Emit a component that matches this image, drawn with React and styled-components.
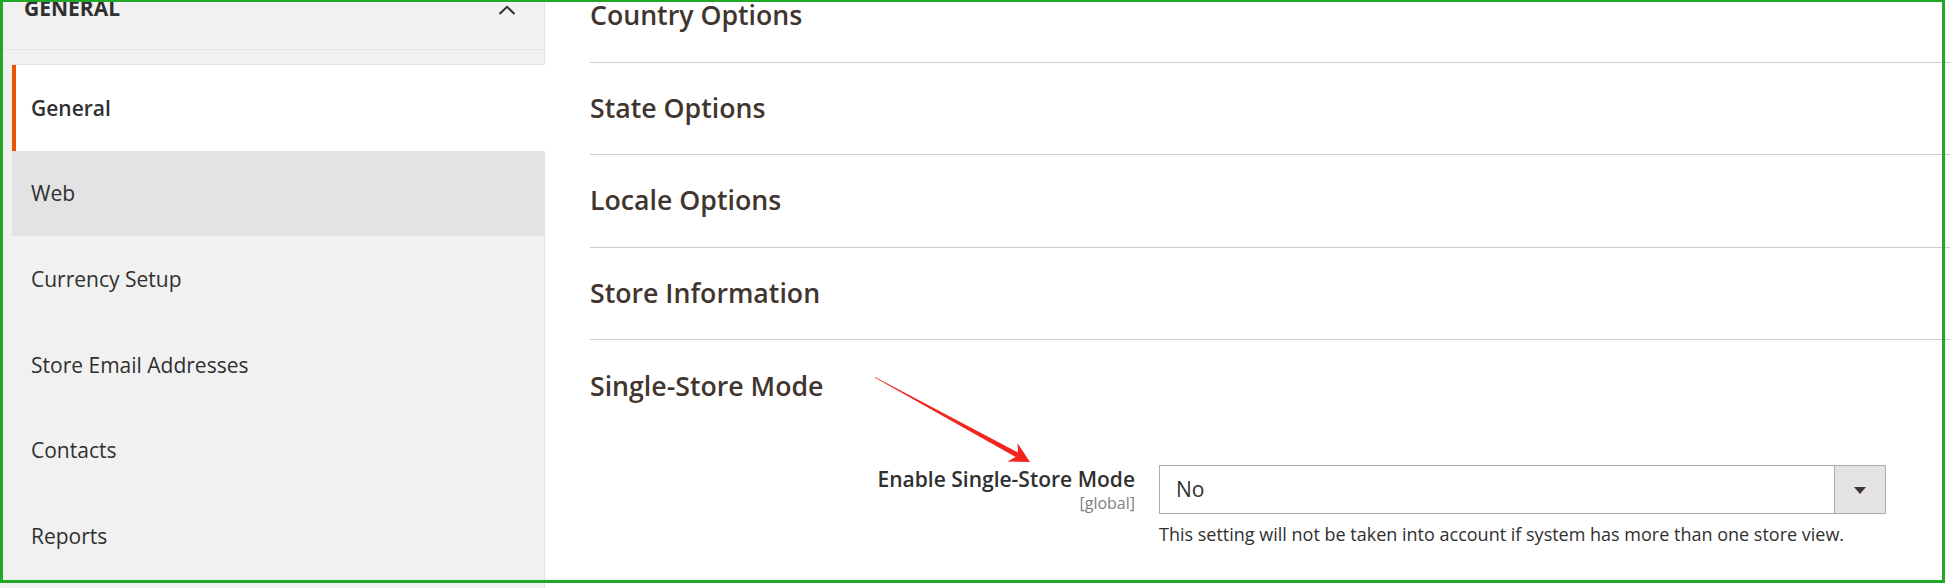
import React from 'react';
import styled, { createGlobalStyle } from 'styled-components';

const Global = createGlobalStyle`
  html, body { margin: 0; padding: 0; background: #fff; }
  body { font-family: "Open Sans", "Noto Sans", sans-serif; color: #303030; }
`;

const Page = styled.div`
  position: relative;
  width: 1950px;
  height: 588px;
  overflow: hidden;
  display: flex;
  background: #fff;
`;

const Sidebar = styled.nav`
  flex: 0 0 545px;
  box-sizing: border-box;
  background: #f1f1f1;
  border-right: 1px solid #e3e3e3;
  display: flex;
  flex-direction: column;
`;

const NavTitle = styled.div`
  box-sizing: border-box;
  height: 50px;
  padding: 0 28px 0 24px;
  border-bottom: 1px solid #e3e3e3;
  display: flex;
  justify-content: space-between;
  align-items: flex-start;
  font-weight: 700;
  font-size: 21px;
  line-height: 17px;
  color: #303030;
  text-transform: uppercase;
`;

const Chevron = styled.svg`
  margin-top: 5px;
  width: 18px;
  height: 10px;
`;

const NavList = styled.ul`
  list-style: none;
  margin: 14px 0 0 12px;
  padding: 0;
  border-top: 1px solid #e3e3e3;
`;

const NavItem = styled.li`
  position: relative;
  box-sizing: border-box;
  height: 85.6px;
  display: flex;
  align-items: center;
  padding-left: 15px;
  border-left: 4px solid ${(p) => (p.$active ? '#eb5202' : 'transparent')};
  background: ${(p) => (p.$active ? '#fff' : p.$hover ? '#e3e3e3' : 'transparent')};
  margin-right: ${(p) => (p.$active ? '-1px' : '0')};
  font-size: 21px;
  font-weight: ${(p) => (p.$active ? 600 : 400)};
  color: #303030;
`;

const Main = styled.main`
  flex: 1;
  padding-left: 45px;
  margin-top: -30px;
`;

const SectionHead = styled.div`
  box-sizing: border-box;
  height: 92.5px;
  padding-bottom: 2px;
  display: flex;
  align-items: center;
  border-bottom: ${(p) => (p.$open ? 'none' : '1px solid #cccccc')};
  font-size: 26.7px;
  font-weight: 600;
  color: #41362f;
`;

const SectionBody = styled.div`
  padding-top: 32px;
`;

const FieldRow = styled.div`
  display: grid;
  grid-template-columns: 545px 727px;
  column-gap: 24px;
`;

const Label = styled.div`
  text-align: right;
  padding-top: 2px;
`;

const LabelText = styled.div`
  font-size: 21px;
  font-weight: 600;
  line-height: 24px;
  color: #303030;
`;

const Scope = styled.div`
  font-size: 16px;
  line-height: 24px;
  color: #808080;
`;

const Control = styled.div`
  display: flex;
  flex-direction: column;
`;

const Select = styled.div`
  box-sizing: border-box;
  height: 49px;
  border: 1px solid #adadad;
  display: flex;
  background: #fff;
`;

const SelectValue = styled.div`
  flex: 1;
  display: flex;
  align-items: center;
  padding-left: 16px;
  font-size: 21px;
  color: #303030;
`;

const SelectArrow = styled.div`
  flex: 0 0 50px;
  background: #e3e3e3;
  border-left: 1px solid #adadad;
  display: flex;
  align-items: center;
  justify-content: center;
  &::after {
    content: '';
    width: 0;
    height: 0;
    border-left: 6px solid transparent;
    border-right: 6px solid transparent;
    border-top: 7px solid #41362f;
    margin-top: 2px;
  }
`;

const Note = styled.div`
  margin-top: 8px;
  font-size: 18px;
  line-height: 24px;
  color: #303030;
`;

const Frame = styled.div`
  position: absolute;
  left: 0;
  top: -1px;
  width: 1945px;
  height: 584px;
  box-sizing: border-box;
  border: 3px solid #22a829;
  pointer-events: none;
`;

const Annotation = styled.svg`
  position: absolute;
  left: 0;
  top: 0;
  width: 1950px;
  height: 588px;
  pointer-events: none;
`;

const navItems = [
  { label: 'General', active: true },
  { label: 'Web', hover: true },
  { label: 'Currency Setup' },
  { label: 'Store Email Addresses' },
  { label: 'Contacts' },
  { label: 'Reports' },
];

const sections = ['Country Options', 'State Options', 'Locale Options', 'Store Information'];

export default function App() {
  return (
    <>
      <Global />
      <Page>
        <Sidebar>
          <NavTitle>
            <span>General</span>
            <Chevron viewBox="0 0 18 10">
              <polyline points="1.5,9 9,1.8 16.5,9" fill="none" stroke="#303030" strokeWidth="2" />
            </Chevron>
          </NavTitle>
          <NavList>
            {navItems.map((it) => (
              <NavItem key={it.label} $active={it.active} $hover={it.hover}>
                {it.label}
              </NavItem>
            ))}
          </NavList>
        </Sidebar>
        <Main>
          {sections.map((s) => (
            <SectionHead key={s}>{s}</SectionHead>
          ))}
          <SectionHead $open>Single-Store Mode</SectionHead>
          <SectionBody>
            <FieldRow>
              <Label>
                <LabelText>Enable Single-Store Mode</LabelText>
                <Scope>[global]</Scope>
              </Label>
              <Control>
                <Select>
                  <SelectValue>No</SelectValue>
                  <SelectArrow />
                </Select>
                <Note>This setting will not be taken into account if system has more than one store view.</Note>
              </Control>
            </FieldRow>
          </SectionBody>
        </Main>
        <Annotation viewBox="0 0 1950 588">
          <polygon
            points="875,377 1018,452.6 1017.6,443.2 1030,462 1007.4,461.6 1015.6,457 875,377.8"
            fill="#f2261e"
          />
        </Annotation>
        <Frame />
      </Page>
    </>
  );
}
